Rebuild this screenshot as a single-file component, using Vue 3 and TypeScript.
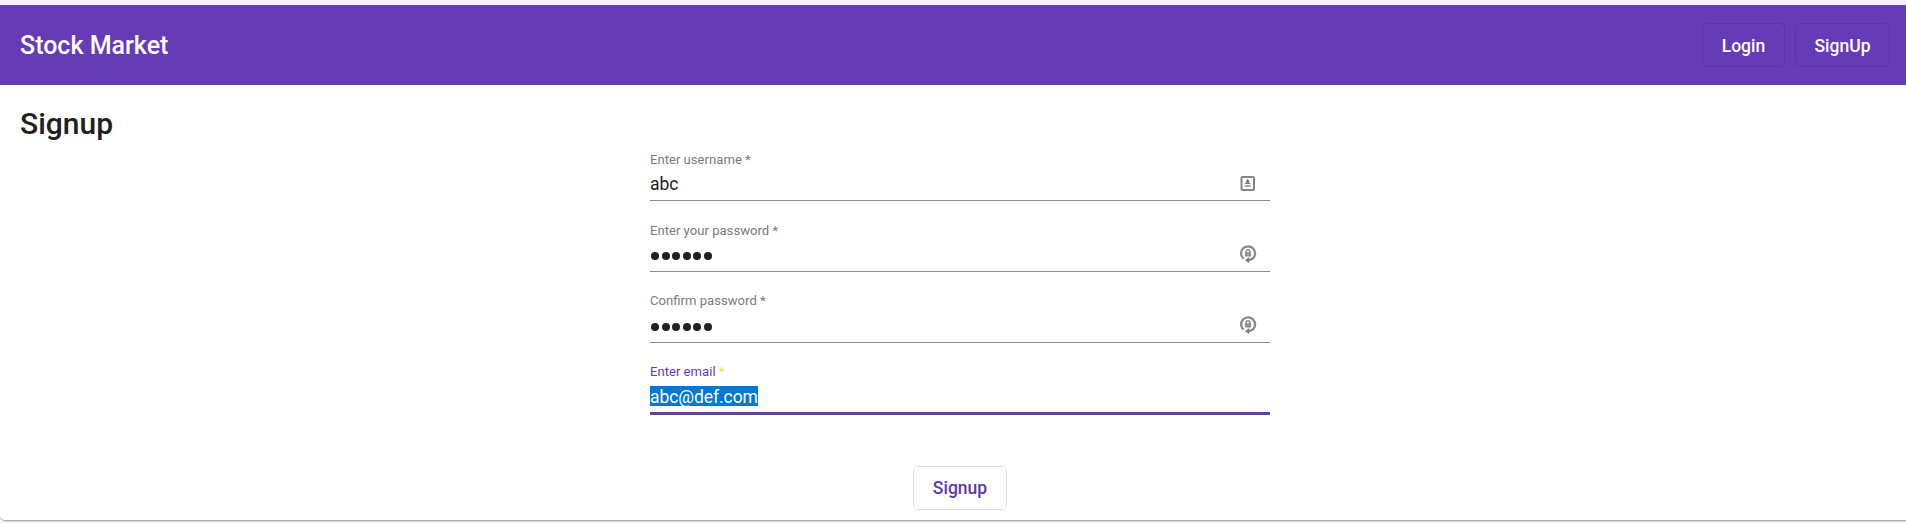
<script setup lang="ts">
interface Field {
  label: string
  value: string
  kind: 'user' | 'password' | 'email'
}

const fields: Field[] = [
  { label: 'Enter username', value: 'abc', kind: 'user' },
  { label: 'Enter your password', value: 'secret', kind: 'password' },
  { label: 'Confirm password', value: 'secret', kind: 'password' },
  { label: 'Enter email', value: 'abc@def.com', kind: 'email' },
]
</script>

<template>
  <div class="page">
    <header class="toolbar">
      <span class="brand">Stock Market</span>
      <nav class="links">
        <button class="btn login">Login</button>
        <button class="btn register">SignUp</button>
      </nav>
    </header>
    <main class="card">
      <h1 class="title">Signup</h1>
      <form class="form" @submit.prevent>
        <div v-for="f in fields" :key="f.label" class="field" :class="f.kind">
          <label class="label">{{ f.label }} <span class="star">*</span></label>
          <div class="row">
            <span v-if="f.kind === 'password'" class="dots"><i v-for="n in f.value.length" :key="n" class="dot"></i></span>
            <span v-else class="value">{{ f.value }}</span>
            <svg v-if="f.kind === 'user'" class="icon" viewBox="0 0 18 18">
              <rect x="2.500" y="3" width="12.500" height="13" rx="1" fill="none" stroke="#858585" stroke-width="2" />
              <path d="M8.700 4.800 10.500 7.500 10 9H11.300V10H6.100V9H7.400L6.900 7.500Z" fill="#777" />
              <path d="M5.700 11h6v2h-6z" fill="#a8a8a8" />
            </svg>
            <svg v-else-if="f.kind === 'password'" class="icon" viewBox="0 0 18 18">
              <path d="M4.600 13.700A7 7 0 1 1 13.700 13.600L10 15.200" fill="none" stroke="#8a8a8a" stroke-width="2.300" />
              <path d="M6 15.200 10.200 12v6z" fill="#777" />
              <path d="M7.200 8V6.500a1.800 1.800 0 0 1 3.600 0V8" fill="none" stroke="#888" stroke-width="1.500" />
              <path d="M5.900 7.300h6.200v4.200H5.900z" fill="#888" />
              <path d="M6.500 9.400h5" stroke="#b5b5b5" stroke-width=".8" />
            </svg>
          </div>
        </div>
        <button class="btn submit">Signup</button>
      </form>
    </main>
  </div>
</template>

<style>
body {
  margin: 0;
  background: #f8f8f8;
}
</style>

<style scoped>
.page {
  box-sizing: border-box;
  height: 524px;
  padding-top: 5px;
  overflow: hidden;
  background: linear-gradient(#f5f3ff 5px, #fafafa 5px);
  font-family: Roboto, sans-serif;
  color: #212121;
}
.toolbar {
  box-sizing: border-box;
  height: 80px;
  padding: 0 16px 0 20px;
  display: flex;
  align-items: center;
  justify-content: space-between;
  background: #673ab7;
  color: #fff;
}
.brand {
  padding-top: 2px;
  font-size: 25px;
  font-weight: 500;
  line-height: 40px;
}
.links {
  display: flex;
  gap: 10px;
}
.btn {
  box-sizing: border-box;
  height: 44px;
  padding: 0;
  border: 1px solid #5b32a8;
  border-radius: 5px;
  background: transparent;
  color: inherit;
  font: 500 17.500px/42px Roboto, sans-serif;
}
.login {
  width: 83px;
  padding-top: 1px;
}
.register {
  width: 95px;
  padding-top: 1px;
}
.card {
  box-sizing: border-box;
  height: 436px;
  padding: 19px 20px 0;
  background: #fff;
  border-bottom: 1px solid #b0b0b0;
  border-bottom-left-radius: 5px;
  box-shadow: 0 1px 0 #d8d8d8;
}
.title {
  margin: 0;
  height: 40px;
  font-size: 30px;
  font-weight: 500;
  line-height: 40px;
}
.form {
  width: 620px;
  margin-left: 630px;
  display: flex;
  flex-direction: column;
}
.field {
  box-sizing: border-box;
  height: 71px;
  padding-top: 6px;
}
.label {
  display: block;
  height: 20px;
  font-size: 13.125px;
  line-height: 20px;
  color: #7b7b7b;
}
.row {
  box-sizing: border-box;
  height: 31px;
  display: flex;
  align-items: flex-start;
  justify-content: space-between;
  border-bottom: 1px solid #8b8b8b;
  padding: 4px 13px 0 0;
}
.value {
  font-size: 17.500px;
  line-height: 20px;
}
.dots {
  display: flex;
  gap: 2.500px;
  padding: 7px 0 0 1px;
}
.dot {
  width: 8px;
  height: 8px;
  border-radius: 50%;
  background: #212121;
}
.icon {
  width: 18px;
  height: 18px;
}
.password + .password {
  padding-top: 5px;
}
.password + .password .row {
  height: 32px;
  padding-top: 5px;
}
.field.email {
  padding-top: 5px;
}
.email .label {
  color: #673ab7;
}
.email .star {
  color: #f5d94e;
}
.email .row {
  height: 33px;
  border-bottom: 3px solid #6040a5;
}
.email .value {
  height: 20px;
  line-height: 22px;
  overflow: hidden;
  background: #0078d7;
  color: #fff;
  letter-spacing: -0.06px;
}
.submit {
  align-self: center;
  width: 94px;
  margin-top: 38px;
  border-color: #dcdcdc;
  color: #5e35b1;
}
</style>
